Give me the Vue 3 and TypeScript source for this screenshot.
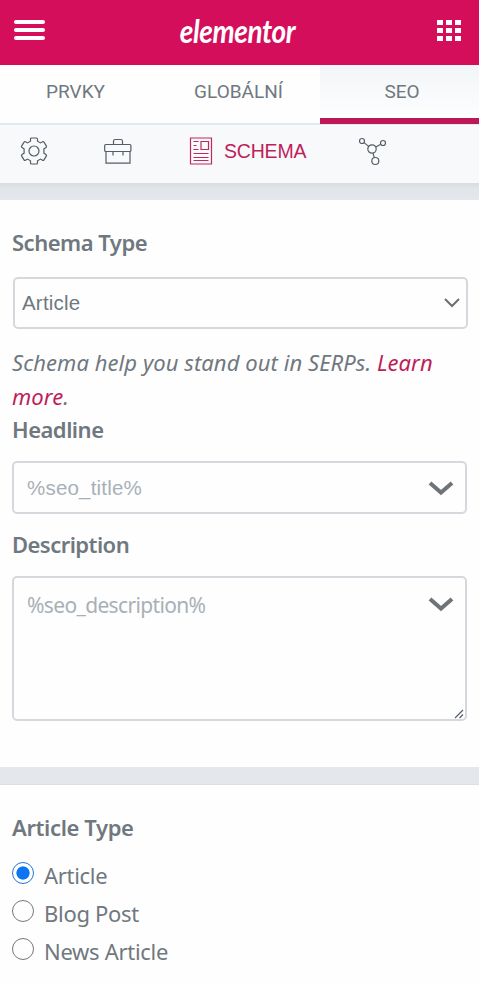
<script setup lang="ts">
import { ref } from 'vue'

const tabs: string[] = ['PRVKY', 'GLOBÁLNÍ', 'SEO']
const activeTab = ref('SEO')
const articleTypes: string[] = ['Article', 'Blog Post', 'News Article']
const articleType = ref('Article')
const dots = [0, 1, 2, 3, 4, 5, 6, 7, 8]
</script>

<template>
  <div class="panel">
    <header class="header">
      <button class="burger" aria-label="Menu"><i></i><i></i><i></i></button>
      <div class="logo"><span>elementor</span></div>
      <button class="apps" aria-label="Widgets"><i v-for="d in dots" :key="d"></i></button>
    </header>

    <nav class="tabs">
      <button
        v-for="tab in tabs"
        :key="tab"
        class="tab"
        :class="{ active: tab === activeTab }"
        @click="activeTab = tab"
      >{{ tab }}</button>
    </nav>

    <nav class="subtabs">
      <svg class="gear" width="30" height="30" viewBox="0 0 30 30">
        <path d="M11.500 5.200V3q0-1 1-1h5q1 0 1 1v2.200l3 1.700 2-1.200q1-.5 1.500.4l2.400 4q.5 1-.4 1.500l-2.100 1.300v4.200l2.100 1.300q.9.500.4 1.500l-2.400 4q-.5.900-1.500.4l-2-1.200-3 1.700V27q0 1-1 1h-5q-1 0-1-1v-2.200l-3-1.700-2 1.200q-1 .5-1.500-.4l-2.400-4q-.5-1 .4-1.500l2.100-1.300v-4.200L3 11.600q-.9-.5-.4-1.500l2.400-4q.5-.9 1.500-.4l2 1.200z" />
        <circle cx="15" cy="15" r="5" />
      </svg>
      <svg class="case" width="30" height="30" viewBox="0 0 30 30">
        <rect x="1.700" y="8.500" width="26.200" height="7" rx="1" />
        <path d="M3 15.500v11.700h24V15.500M10.500 8.500V5.300q0-1.800 1.800-1.800h5.400q1.800 0 1.800 1.800v3.200M10 15.500v4M20 15.500v4" />
      </svg>
      <div class="schema">
        <svg width="24" height="28" viewBox="0 0 24 28">
          <path d="M1.500 1h21v26h-21zM12 4.500h7.500v8H12zM4.500 4.500h5M4.500 8.500h3M4.500 12.500h5M4.500 16.500h15M4.500 20.500h15M4.500 23.500h15" />
        </svg>
        <span>SCHEMA</span>
      </div>
      <svg class="nodes" width="30" height="30" viewBox="0 0 30 30">
        <circle cx="15" cy="13" r="4.200" />
        <circle cx="5" cy="5" r="2.500" />
        <circle cx="26" cy="7" r="2.500" />
        <circle cx="18.300" cy="25" r="3.500" />
        <path d="m7 6.600 4.700 3.800M18.800 11l5-2.800M16 17.100l1.300 4.500" />
      </svg>
    </nav>

    <div class="band first"></div>

    <section class="schema-section">
      <h3 class="schema-title">Schema Type</h3>
      <div class="select">
        <span>Article</span>
        <svg width="16" height="10" viewBox="0 0 16 10"><path d="m1 1 7 7 7-7" /></svg>
      </div>
      <p class="help">
        <span>Schema help you stand out in SERPs. <a>Learn</a></span><br />
        <span><a>more</a>.</span>
      </p>
      <h3 class="headline-title">Headline</h3>
      <div class="field">
        <span>%seo_title%</span>
        <svg class="caret" width="26" height="16" viewBox="0 0 26 16"><path d="m2 3 11 9.500L24 3" /></svg>
      </div>
      <h3 class="description-title">Description</h3>
      <div class="field area">
        <span>%seo_description%</span>
        <svg class="caret" width="26" height="16" viewBox="0 0 26 16"><path d="m2 3 11 9.500L24 3" /></svg>
        <svg class="grip" width="10" height="10" viewBox="0 0 10 10"><path d="m1 9 8-8M5.500 9 9 5.500" /></svg>
      </div>
    </section>

    <div class="band second"></div>

    <section class="type-section">
      <h3 class="type-title">Article Type</h3>
      <label v-for="t in articleTypes" :key="t" class="option" @click="articleType = t">
        <span class="radio" :class="{ on: t === articleType }"></span>
        <span>{{ t }}</span>
      </label>
    </section>
  </div>
</template>

<style>
body {
  background: #fefefe;
}
</style>

<style scoped>
* {
  box-sizing: border-box;
}
.panel {
  width: 479px;
  height: 983px;
  overflow: hidden;
  background: #fefefe;
  color: #70787f;
  font-family: "Noto Sans", "Open Sans", sans-serif;
}
button {
  border: 0;
  padding: 0;
  background: none;
  font: inherit;
  color: inherit;
}
svg {
  display: block;
  flex: none;
  fill: none;
  stroke: #555d66;
  stroke-width: 1.200;
}
.header {
  height: 65px;
  padding: 0 18px 5px 14px;
  display: flex;
  align-items: center;
  justify-content: space-between;
  background: #d50e5b;
}
.burger {
  width: 31px;
  display: grid;
  gap: 4px;
}
.burger i {
  height: 4px;
  border-radius: 2px;
  background: #fff;
}
.logo {
  width: 117px;
  height: 60px;
  margin-left: -7px;
  display: flex;
  align-items: center;
  justify-content: center;
  color: #fff;
  font: italic 700 28px/58px Lato, sans-serif;
}
.logo span {
  display: block;
  letter-spacing: -0.400px;
  transform: scaleY(1.150);
}
.apps {
  display: grid;
  grid-template-columns: repeat(3, 6px);
  gap: 3px;
}
.apps i {
  height: 5px;
  background: #fff;
}
.tabs {
  height: 60px;
  display: grid;
  grid-template-columns: 157px 163px 159px;
  border-bottom: 2px solid #e4e7ea;
}
.tab {
  height: 58px;
  padding: 0 0 5px;
  font: 400 19px/53px Roboto, sans-serif;
}
.tab:first-child {
  padding-right: 6px;
}
.tab.active {
  height: 60px;
  padding: 0 0 0 5px;
  background: linear-gradient(#f2f5f7, #fdfefe);
  border-bottom: 6px solid #bc1858;
  line-height: 54px;
  height: 59px;
}
.subtabs {
  height: 58px;
  padding: 0 0 7px 19px;
  display: flex;
  align-items: center;
  background: #f8f9fb;
}
.case {
  margin-left: 54px;
}
.schema {
  margin-left: 56px;
  width: 117px;
  display: flex;
  align-items: center;
  gap: 11px;
  color: #bf1d5b;
  font: 400 19.500px/30px "Liberation Sans", sans-serif;
  letter-spacing: -0.200px;
}
.schema svg {
  stroke: #c02860;
}
.nodes {
  margin-left: 51px;
}
.band {
  background: #e4e7eb;
}
.first {
  height: 17px;
  background: linear-gradient(#d9dde1, #e2e5e9 7px, #e4e8ec);
}
.second {
  height: 18px;
  border-bottom: 1px solid #dcdee1;
}
h3 {
  margin: 0;
  font-size: 22px;
  font-weight: 600;
  line-height: 30px;
  letter-spacing: -0.500px;
}
.schema-section {
  height: 567px;
  padding: 27px 12px 0;
}
.select {
  width: 455px;
  height: 52px;
  margin: 20px 0 0 1px;
  padding: 0 6px 0 7px;
  border: 2px solid #d5d8dc;
  border-radius: 5px;
  display: flex;
  align-items: center;
  justify-content: space-between;
  font: 400 20.500px/30px "Liberation Sans", sans-serif;
  letter-spacing: 0.200px;
}
.select svg {
  stroke: #6b6f74;
  stroke-width: 2;
}
.help {
  margin: 16px 0 0;
  height: 68px;
  font-size: 22px;
  font-style: italic;
  line-height: 34px;
  white-space: nowrap;
  letter-spacing: 0.070px;
}
.help a {
  color: #bd1e5a;
}
.headline-title {
  margin-top: 1px;
}
.field {
  width: 455px;
  height: 53px;
  margin-top: 17px;
  padding: 0 11px 0 13px;
  border: 2px solid #d5d8dc;
  border-radius: 5px;
  display: flex;
  align-items: center;
  justify-content: space-between;
  color: #a8b0b7;
  font: 400 20.500px/30px "Liberation Sans", sans-serif;
  letter-spacing: 0.200px;
}
.caret {
  stroke: #6d7378;
  stroke-width: 4;
}
.description-title {
  margin-top: 15px;
  letter-spacing: -0.550px;
}
.area {
  position: relative;
  height: 145px;
  align-items: flex-start;
  padding-top: 12px;
  font: 400 21px/30px "Noto Sans", sans-serif;
  letter-spacing: -0.650px;
}
.area .caret {
  margin-top: 6px;
}
.grip {
  position: absolute;
  right: 1px;
  bottom: 0;
}
.type-section {
  padding: 27px 12px 0;
}
.type-title {
  margin-bottom: 15px;
  letter-spacing: -0.380px;
}
.option {
  height: 38px;
  display: flex;
  align-items: flex-start;
  gap: 10px;
  font-size: 22px;
  line-height: 36px;
  letter-spacing: -0.300px;
}
.radio {
  width: 22px;
  height: 22px;
  margin-top: 5px;
  border: 1px solid #777;
  border-radius: 50%;
}
.radio.on {
  border-color: #2476d8;
  background: radial-gradient(circle, #0b75f5 6.200px, #fff 7px);
}
</style>
